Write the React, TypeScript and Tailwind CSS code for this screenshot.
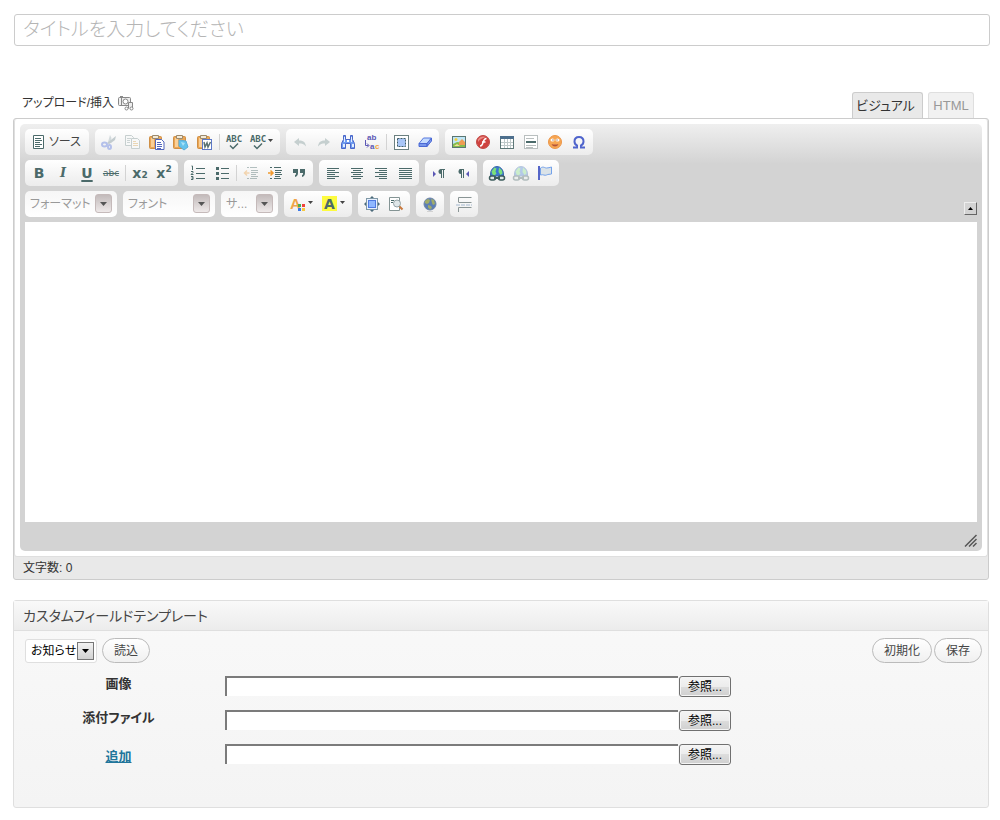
import type { ReactNode } from "react";

const INK = "#4b6a6a";

function Svg({ children }: { children: ReactNode }) {
  return (
    <svg width={16} height={16} viewBox="0 0 16 16" fill="none" className="block shrink-0 overflow-visible" aria-hidden="true">
      {children}
    </svg>
  );
}

function lines(rows: [number, number, number][], color = INK) {
  return rows.map(([x, y, w]) => <rect key={`${x}-${y}`} x={x} y={y} width={w} height={1} fill={color} />);
}

function Clipboard() {
  return (
    <>
      <rect x="0.5" y="2.5" width="12" height="12" rx="1" fill="#eba654" stroke="#cf8f45" />
      <path d="M2 4h3v9H2z" fill="#f9cf97" />
      <path d="M3.500 1.500h6v3h-6z" fill="#f3ead8" stroke="#9d8a6c" />
    </>
  );
}

function Globe({ faded }: { faded?: boolean }) {
  return (
    <g opacity={faded ? 0.35 : 1}>
      <path d="M1.500 9a6.500 7.500 0 0 1 13 0v2h-13z" fill="#3c78d0" stroke="#3a68a8" />
      <path d="M2.500 6.500L5.500 2.500l2 1-1 3 1 2-2 2-2-1zM10 2.500l3 3 .5 3-2 1.500-2-3z" fill="#7be07a" />
      <rect x="0.500" y="11" width="6" height="4" rx="2" fill="#dfe9e6" stroke="#3d5c5c" strokeWidth="1.500" />
      <rect x="9.500" y="11" width="6" height="4" rx="2" fill="#dfe9e6" stroke="#3d5c5c" strokeWidth="1.500" />
      <path d="M5 13h6" stroke="#3d5c5c" strokeWidth="2" />
    </g>
  );
}

const icons: Record<string, ReactNode> = {
  source: (
    <>
      <path d="M2.500 1.500h10v13h-10z" fill="#fff" stroke={INK} />
      {lines([[4, 4, 6], [4, 6, 7], [4, 8, 5], [4, 10, 7], [4, 12, 5]])}
    </>
  ),
  cut: (
    <>
      <path d="M9 1l1.500 3-1 4.500L8 11 7 8z" fill="#d3dadd" />
      <path d="M15 2l-1 4-4 3-3 1-1-1z" fill="#c3cccf" />
      <ellipse cx="3.500" cy="10.500" rx="2.500" ry="2" stroke="#b4c0ea" strokeWidth="2" />
      <ellipse cx="8.500" cy="13" rx="1.500" ry="2" stroke="#b4c0ea" strokeWidth="2" />
    </>
  ),
  copy: (
    <>
      <path d="M0.500 1.500h6l2 2v8h-8z" fill="#f7f8f8" stroke="#c6cfcf" />
      {lines([[2, 4, 4], [2, 6, 3], [2, 8, 3]], "#ccd4d4")}
      <path d="M6.500 4.500h6l2 2v8h-8z" fill="#f7f8f8" stroke="#c6cfcf" />
      {lines([[8, 7, 3], [8, 9, 5], [8, 11, 5]], "#ead6b4")}
    </>
  ),
  paste: (
    <>
      <Clipboard />
      <path d="M6.500 5.500h6l2.500 2.500v7.500H6.500z" fill="#fff" stroke="#5367bd" />
      {lines([[8, 8, 4], [8, 10, 5], [8, 12, 5], [8, 14, 4]], "#5367bd")}
    </>
  ),
  pasteText: (
    <>
      <Clipboard />
      <path d="M6 6l7 1 2 6-4 3-5-4z" fill="#64c3ec" stroke="#5aaedb" />
      <path d="M8 8l4 1-2 3z" fill="#a9e2f8" />
    </>
  ),
  pasteWord: (
    <>
      <Clipboard />
      <rect x="5.500" y="5.500" width="9" height="10" fill="#fff" stroke="#5c78c8" />
      <path d="M7 8l1 5 2-4 1 4L13.500 8" stroke="#5a7272" strokeWidth="1.500" />
    </>
  ),
  spell: (
    <>
      <text x="8" y="8" textAnchor="middle" fontSize="9" fontWeight="700" fontFamily="DejaVu Sans Mono, monospace" fill={INK}>ABC</text>
      <path d="M4 11.500l3 3L12 9.500" stroke={INK} strokeWidth="1.500" />
    </>
  ),
  undo: <path d="M2 8l5-4v2.500c4 0 6.500 1.500 7 6-2-2.500-4-3-7-3V12z" fill="#c5cfcf" />,
  redo: <path d="M14 8L9 4v2.500c-4 0-6.500 1.500-7 6 2-2.500 4-3 7-3V12z" fill="#c5cfcf" />,
  find: (
    <>
      <path d="M3.500 1.500h2v4h5v-4h2v4l2 4v5h-4v-5h-5v5h-4v-5l2-4z" fill="#6f9cf0" stroke="#4a66c8" />
      <path d="M3 10h2v3H3zM12 10h2v3h-2zM4 3h1v5H4zM11 3h1v5h-1z" fill="#e3efff" />
      <path d="M7 6h2v2H7z" fill="#fff" />
    </>
  ),
  replace: (
    <g fontFamily="Liberation Sans, sans-serif" fontWeight="700" fontSize="8">
      <text x="3" y="6" fill="#5b57b5">ab</text>
      <text x="6" y="15" fill="#5b57b5">a</text>
      <text x="11" y="15" fill="#f2a53c">c</text>
      <path d="M1.500 6v5.500h3M3 9.500l2 2-2 2" stroke="#5b57b5" />
    </g>
  ),
  selectAll: (
    <>
      <rect x="1.500" y="1.500" width="14" height="14" fill="#fff" stroke="#6b8080" />
      <rect x="4.500" y="4.500" width="8" height="8" fill="#a9c6f7" stroke="#3d5c66" strokeDasharray="2 1" />
    </>
  ),
  eraser: (
    <>
      <path d="M6.500 4h8L10 9.500H2z" fill="#c4dbff" stroke="#5577dd" />
      <path d="M2 9.500h8v3H2zM10 9.500L14.500 4v3L10 12.500z" fill="#7796ec" stroke="#4a68d4" />
    </>
  ),
  image: (
    <>
      <rect x="1.500" y="2.500" width="13" height="11" fill="#bfe6f6" stroke="#5a7672" />
      <path d="M2 10l4-2 8 1v4H2z" fill="#86bd4c" />
      <path d="M8 8l3-3 3 3v3H8z" fill="#ee9c52" />
      <circle cx="5" cy="5.500" r="1.500" fill="#f6cf3c" />
      <path d="M3 12l3-2 3 2z" fill="#f3e29a" />
    </>
  ),
  flash: (
    <>
      <circle cx="8" cy="8" r="6.500" fill="#cf4340" stroke="#c24a47" />
      <path d="M3 5.500a6 5 0 0 1 8-2.500C8 4 5 5 3 8z" fill="#e98b86" />
      <path d="M11.500 4.500c-3 0-3 3-4 5.500-.5 1.500-1 2-2.500 2M7 8h3.500" stroke="#fff" strokeWidth="1.500" />
    </>
  ),
  table: (
    <>
      <rect x="1.500" y="2.500" width="13" height="12" fill="#fff" stroke="#5d7777" />
      <path d="M1 2h14v3H1z" fill="#4d6f8d" />
      <path d="M2 8.500h12M2 11.500h12M5.500 5v9M8.500 5v9M11.500 5v9" stroke="#c0caca" />
    </>
  ),
  hr: (
    <>
      <rect x="1.500" y="1.500" width="13" height="13" fill="#fff" stroke="#b9bfbf" />
      {lines([[3, 4, 8], [3, 11, 10], [3, 13, 7]], "#b9bfbf")}
      <path d="M3 7h10v2H3z" fill={INK} />
    </>
  ),
  smiley: (
    <>
      <circle cx="8" cy="8" r="6.500" fill="#f7a652" stroke="#ec9648" />
      <ellipse cx="5.500" cy="6" rx="2" ry="1.500" fill="#fff" />
      <ellipse cx="10.500" cy="6" rx="2" ry="1.500" fill="#fff" />
      <path d="M5.500 5.500h1v1h-1zM9.500 5.500h1v1h-1z" fill="#6b3f1d" />
      <path d="M4.500 10q3.500 1 7 0-1 2.500-3.500 2.500T4.500 10z" fill="#b3543a" />
    </>
  ),
  omega: <path d="M2 13.500h4v-2C4 10.500 3.500 9 3.500 7.500c0-3 2-4.500 4.500-4.500s4.500 1.500 4.500 4.500c0 1.500-.5 3-2.500 4v2h4" stroke="#4f64cc" strokeWidth="2" />,
  ol: (
    <>
      <path d="M1.500 1h1v4M1 6.500h2v1l-2 2h2.500M1 11.500h2v3H1M1.500 13h1.500" stroke={INK} />
      {lines([[6, 3, 9], [6, 8, 9], [6, 13, 9]])}
    </>
  ),
  ul: (
    <>
      <path d="M2 2h3v3H2zM2 7h3v3H2zM2 12h3v3H2z" fill={INK} />
      {lines([[7, 3, 8], [7, 8, 8], [7, 13, 8]])}
    </>
  ),
  outdent: (
    <g opacity="0.4">
      {lines([[4, 2, 2], [7, 2, 7], [8, 5, 7], [8, 7, 7], [8, 9, 5], [8, 11, 7], [4, 13, 2], [7, 13, 7]])}
      <path d="M6.500 8H1.500M4 5.500L1.500 8 4 10.500" stroke="#f0a548" strokeWidth="1.500" />
    </g>
  ),
  indent: (
    <>
      {lines([[3, 2, 2], [7, 2, 7], [8, 5, 7], [8, 7, 6], [8, 9, 7], [8, 11, 5], [3, 13, 2], [7, 13, 7]])}
      <path d="M1 8h5M3.500 5.500L6 8l-2.500 2.500" stroke="#f09a2f" strokeWidth="1.500" />
    </>
  ),
  quote: <path d="M2 4h5v4c0 2-1 3.500-3 4v-2c1 0 1-1 1-2H2zM9 4h5v4c0 2-1 3.500-3 4v-2c1 0 1-1 1-2H9z" fill={INK} />,
  left: lines([[2, 3, 12], [2, 5, 8], [2, 7, 12], [2, 9, 8], [2, 11, 12], [2, 13, 8]]),
  center: lines([[2, 3, 12], [4, 5, 8], [2, 7, 12], [4, 9, 8], [2, 11, 12], [4, 13, 8]]),
  right: lines([[2, 3, 12], [6, 5, 8], [2, 7, 12], [6, 9, 8], [2, 11, 12], [6, 13, 8]]),
  justify: lines([[2, 3, 13], [2, 5, 13], [2, 7, 13], [2, 9, 13], [2, 11, 13], [2, 13, 13]]),
  ltr: (
    <>
      <path d="M2 6l3 3-3 3z" fill="#5b57b5" />
      <path d="M14 4.500H9.500M10.500 4v9M12.500 4v9" stroke={INK} />
      <path d="M10 4a2.500 2.500 0 0 0 0 5z" fill={INK} />
    </>
  ),
  rtl: (
    <>
      <path d="M14 6l-3 3 3 3z" fill="#5b57b5" />
      <path d="M9 4.500H4.500M6.500 4v9M8.500 4v9" stroke={INK} />
      <path d="M6 4a2.500 2.500 0 0 0 0 5z" fill={INK} />
    </>
  ),
  link: <Globe />,
  unlink: <Globe faded />,
  anchor: (
    <>
      <path d="M2 1v14" stroke="#5565c8" strokeWidth="2" />
      <path d="M3.500 3c3-2 4 0 6 0s3-.5 5-1v7c-2 .5-3 0-5 1s-3-1-6 0z" fill="#dbe3e8" stroke="#74a2ea" />
    </>
  ),
  textColor: (
    <>
      <text x="0" y="13" fontSize="15" fontWeight="700" fontFamily="Liberation Sans, sans-serif" fill="#f0a548">A</text>
      <path d="M8 8h3v3H8z" fill="#4caf50" />
      <path d="M12 8h3v3h-3z" fill="#f0433a" />
      <path d="M8 12h3v3H8z" fill="#3b78e7" />
      <path d="M12 12h3v3h-3z" fill="#f7c83b" />
    </>
  ),
  bgColor: (
    <>
      <path d="M0 0h15v15H0z" fill="#fdfb3f" />
      <text x="7.500" y="13" textAnchor="middle" fontSize="14" fontWeight="700" fontFamily="DejaVu Sans, sans-serif" fill={INK}>A</text>
    </>
  ),
  maximize: (
    <>
      <path d="M8 0l3 3H5zM8 16l3-3H5zM0 8l3-3v6zM16 8l-3-3v6z" fill="#4b6a7a" />
      <rect x="2.500" y="2.500" width="11" height="11" fill="#e8f1ff" stroke="#7f98a6" />
      <rect x="4.500" y="4.500" width="7" height="7" fill="#8fb8ff" stroke="#4f7ae0" />
    </>
  ),
  blocks: (
    <>
      <path d="M1.500 1.500h10v13h-10z" fill="#fff" stroke="#849494" />
      <path d="M3 4.500h3M3 6.500h2" stroke={INK} />
      <circle cx="9" cy="7.500" r="3.500" fill="#dfe6e8" stroke="#94a2a6" />
      <path d="M11.500 10.500l3 3" stroke="#c8793e" strokeWidth="2" />
    </>
  ),
  iframe: (
    <>
      <circle cx="8" cy="8" r="6" fill="#5c7eb4" stroke="#6f86a8" />
      <path d="M3 5l3-2 2 1-1 3-2 1-2-1zM9 3l3 1 1 4-2 1-1-2zM6 9l3 1 1 2-2 1.500-2-2z" fill="#a1ad68" />
      <path d="M5 15.500h6" stroke="#d2d2d2" />
    </>
  ),
  pageBreak: (
    <>
      <path d="M15.500 1.500h-13V6M15.500 11.500h-13V16M2.500 6.500h13" stroke="#8a9595" />
      <path d="M0 9h16" stroke="#a4b8ce" strokeDasharray="4 1" />
    </>
  ),
};

function Sep() {
  return <span className="mx-[2px] h-4 w-px shrink-0 bg-[#d3d3d3]" />;
}

function Tool({ icon, label }: { icon: string; label: string }) {
  return (
    <button type="button" aria-label={label} title={label} className="flex h-6 w-6 shrink-0 items-center justify-center">
      <Svg>{icons[icon]}</Svg>
    </button>
  );
}

function MenuTool({ icon, label }: { icon: string; label: string }) {
  return (
    <button type="button" aria-label={label} title={label} className="flex h-6 w-8 shrink-0 items-center pl-1">
      <Svg>{icons[icon]}</Svg>
      <svg width="5" height="16" viewBox="0 0 5 16" className="ml-[2px]" aria-hidden="true">
        <path d="M0 5h5L2.500 8z" fill="#444" />
      </svg>
    </button>
  );
}

function TextTool({ label, children }: { label: string; children: ReactNode }) {
  return (
    <button
      type="button"
      aria-label={label}
      title={label}
      className="flex h-6 w-6 shrink-0 items-center justify-center font-['DejaVu_Sans'] text-sm font-bold text-[#4b6a6a]"
    >
      {children}
    </button>
  );
}

function Group({ children }: { children: ReactNode }) {
  return (
    <div className="flex h-[26px] items-center rounded-[5px] bg-linear-to-b from-white to-[#ececec] px-[2px]">
      {children}
    </div>
  );
}

function Combo({ label, text, size }: { label: string; text: string; size: string }) {
  return (
    <div className={`relative h-[26px] rounded-[5px] bg-linear-to-b from-[#f6f6f6] to-white ${size}`}>
      <select aria-label={label} className="block h-full w-full appearance-none bg-transparent pl-[5px] text-xs text-[#999] outline-none">
        <option>{text}</option>
      </select>
      <span className="pointer-events-none absolute top-[3px] right-[5px] flex h-[19px] w-[17px] items-center justify-center rounded-[3px] border border-[#c5baba] bg-linear-to-b from-[#c3bbbb] to-[#eee9e9]">
        <svg width="7" height="4" viewBox="0 0 7 4" aria-hidden="true">
          <path d="M0 0h7L3.500 4z" fill="#555" />
        </svg>
      </span>
    </div>
  );
}

function PillButton({ children }: { children: ReactNode }) {
  return (
    <button type="button" className="h-[25px] rounded-full border border-[#bbb] bg-linear-to-b from-white to-[#f0f0f0] px-[11px] text-xs text-[#464646]">
      {children}
    </button>
  );
}

function FileRow({ id, low, children }: { id: string; low?: boolean; children: ReactNode }) {
  return (
    <div className="flex h-[21px]">
      <div className={`mr-[13px] w-[187px] shrink-0 text-center text-[13px] leading-4 font-bold ${low ? "self-end" : "self-start"}`}>
        {children}
      </div>
      <input id={id} aria-labelledby={`${id}-label`} type="text" className="h-5 w-[453px] min-w-0 border-t-2 border-l-2 border-[#7b7b7b] bg-white px-1 text-xs outline-none" />
      <button
        type="button"
        className="ml-px h-[21px] w-[52px] shrink-0 rounded-[3px] border border-[#707070] bg-[linear-gradient(#f4f4f4,#ececec_50%,#dddddd_50%,#cfcfcf)] text-xs leading-none text-black inset-ring inset-ring-[#f5f5f5]"
      >
        参照...
      </button>
    </div>
  );
}

export default function App() {
  return (
    <main className="min-h-screen bg-white pb-3 font-['Liberation_Sans','Noto_Sans_CJK_JP',sans-serif] text-xs text-[#333] [font-feature-settings:'palt']">
      <div className="pt-[14px] pr-[10px] pl-[14px]">
        <input
          type="text"
          aria-label="タイトル"
          placeholder="タイトルを入力してください"
          className="block h-8 w-full rounded-[3px] border border-[#ccc] px-2 text-[19px] font-light outline-none placeholder:text-[#b5b5b5]"
        />
      </div>

      <div className="mt-[46px] pr-[11px] pl-[13px]">
        <div className="flex h-[26px] items-end justify-between pr-[15px] pl-[9px]">
          <a href="#media" className="flex h-[26px] items-center gap-1 pb-1">
            アップロード/挿入
            <Svg>
              <rect x="0.500" y="2.500" width="12" height="8" rx="1" fill="#eee" stroke="#888" />
              <path d="M2 1.500h3M3.500 3v7" stroke="#888" />
              <circle cx="7.500" cy="6.500" r="2.500" fill="#fff" stroke="#888" />
              <path d="M10.500 13.500v-6h4v6" fill="#eee" stroke="#888" />
              <circle cx="8.500" cy="13.500" r="1.500" fill="#fff" stroke="#888" />
              <circle cx="13.500" cy="13.500" r="1.500" fill="#fff" stroke="#888" />
            </Svg>
          </a>
          <div className="flex gap-[5px]">
            <button type="button" className="h-[26px] w-[71px] rounded-t-[3px] border border-b-0 border-[#ccc] bg-[#e9e9e9] pr-1 text-[13px]">ビジュアル</button>
            <button type="button" className="h-[26px] w-[46px] rounded-t-[3px] border border-b-0 border-[#dfdfdf] bg-[#f1f1f1] text-[13px] text-[#999]">HTML</button>
          </div>
        </div>

        <div className="rounded-[3px] border border-[#ccc] bg-[#e9e9e9]">
          <div className="rounded-[3px] border-x border-b border-[#dfdfdf] bg-white px-[5px] pt-[5px] pb-[5px]">
            <div className="rounded-[5px] bg-[#d3d3d3] bg-[linear-gradient(#efefef,#d3d3d3_40px)] px-[5px] pt-[5px]">
              <div className="flex flex-col gap-[5px] pb-[5px]">
                <div className="flex flex-wrap gap-x-[6px] gap-y-[5px]">
                  <Group>
                    <button type="button" className="flex h-6 items-center gap-[2px] px-1 text-[#444]">
                      <Svg>{icons.source}</Svg>
                      <span className="w-[34px] text-left whitespace-nowrap">ソース</span>
                    </button>
                  </Group>
                  <Group>
                    <Tool icon="cut" label="切り取り" />
                    <Tool icon="copy" label="コピー" />
                    <Tool icon="paste" label="貼り付け" />
                    <Tool icon="pasteText" label="プレーンテキスト貼り付け" />
                    <Tool icon="pasteWord" label="ワード文章から貼り付け" />
                    <Sep />
                    <Tool icon="spell" label="スペルチェック" />
                    <MenuTool icon="spell" label="スペルチェック設定" />
                  </Group>
                  <Group>
                    <Tool icon="undo" label="元に戻す" />
                    <Tool icon="redo" label="やり直し" />
                    <Tool icon="find" label="検索" />
                    <Tool icon="replace" label="置き換え" />
                    <Sep />
                    <Tool icon="selectAll" label="すべて選択" />
                    <Tool icon="eraser" label="フォーマット削除" />
                  </Group>
                  <Group>
                    <Tool icon="image" label="イメージ" />
                    <Tool icon="flash" label="Flash" />
                    <Tool icon="table" label="テーブル" />
                    <Tool icon="hr" label="横罫線" />
                    <Tool icon="smiley" label="絵文字" />
                    <Tool icon="omega" label="特殊文字挿入" />
                  </Group>
                </div>

                <div className="flex flex-wrap gap-x-[6px] gap-y-[5px]">
                  <Group>
                    <TextTool label="太字">B</TextTool>
                    <TextTool label="斜体"><i className="font-['DejaVu_Serif'] text-[13px]">I</i></TextTool>
                    <TextTool label="下線"><u className="decoration-2 underline-offset-2">U</u></TextTool>
                    <TextTool label="打ち消し線"><s className="text-[9px] font-normal">abc</s></TextTool>
                    <Sep />
                    <TextTool label="下付き">x<sub className="text-[9px]">2</sub></TextTool>
                    <TextTool label="上付き">x<sup className="text-[9px]">2</sup></TextTool>
                  </Group>
                  <Group>
                    <Tool icon="ol" label="段落番号" />
                    <Tool icon="ul" label="箇条書き" />
                    <Sep />
                    <Tool icon="outdent" label="インデント解除" />
                    <Tool icon="indent" label="インデント" />
                    <Tool icon="quote" label="ブロック引用" />
                  </Group>
                  <Group>
                    <Tool icon="left" label="左揃え" />
                    <Tool icon="center" label="中央揃え" />
                    <Tool icon="right" label="右揃え" />
                    <Tool icon="justify" label="両端揃え" />
                  </Group>
                  <Group>
                    <Tool icon="ltr" label="左から右" />
                    <Tool icon="rtl" label="右から左" />
                  </Group>
                  <Group>
                    <Tool icon="link" label="リンク挿入" />
                    <Tool icon="unlink" label="リンク削除" />
                    <Tool icon="anchor" label="アンカー挿入" />
                  </Group>
                </div>

                <div className="flex flex-wrap gap-x-[6px] gap-y-[5px]">
                  <Combo label="フォーマット" text="フォーマット" size="w-[92px]" />
                  <Combo label="フォント" text="フォント" size="w-[92px]" />
                  <Combo label="サイズ" text="サ..." size="w-[57px]" />
                  <Group>
                    <MenuTool icon="textColor" label="テキストカラー" />
                    <MenuTool icon="bgColor" label="背景色" />
                  </Group>
                  <Group>
                    <Tool icon="maximize" label="最大化" />
                    <Tool icon="blocks" label="ブロック表示" />
                  </Group>
                  <Group>
                    <Tool icon="iframe" label="iframe" />
                  </Group>
                  <Group>
                    <Tool icon="pageBreak" label="改ページ挿入" />
                  </Group>
                  <button
                    type="button"
                    aria-label="ツールバーを閉じる"
                    className="mb-[2px] ml-auto flex h-[13px] w-[13px] items-center justify-center self-end border border-t-[#eee] border-r-[#666] border-b-[#666] border-l-[#eee] bg-[#d3d3d3]"
                  >
                    <svg width="5" height="3" viewBox="0 0 5 3" aria-hidden="true">
                      <path d="M0 3h5L2.500 0z" fill="#000" />
                    </svg>
                  </button>
                </div>
              </div>
              <textarea aria-label="本文" className="block h-[300px] w-full resize-none bg-white p-2 outline-none" />
              <div className="flex h-[29px] items-end justify-end pb-1">
                <svg width="13" height="13" viewBox="0 0 13 13" stroke="#555" strokeWidth="1.500" aria-hidden="true">
                  <path d="M1 12.500L12.500 1M5 12.500L12.500 5M9 12.500L12.500 9" />
                </svg>
              </div>
            </div>
          </div>
          <div className="flex h-[22px] items-center px-[9px]">文字数: 0</div>
        </div>

        <section className="mt-5 rounded-[3px] border border-[#dfdfdf] bg-linear-to-b from-[#f9f9f9] to-[#f4f4f4]">
          <h2 className="flex h-[30px] items-center border-b border-[#dfdfdf] bg-linear-to-b from-[#f9f9f9] to-[#ececec] px-[9px] text-sm text-[#464646]">
            カスタムフィールドテンプレート
          </h2>
          <div className="pt-[7px] pr-[6px] pb-[42px] pl-[11px]">
            <div className="flex items-center">
              <div className="relative h-6 w-[72px]">
                <select aria-label="テンプレート" className="block h-6 w-full appearance-none rounded-[3px] border border-[#dfdfdf] bg-white pl-[5px] text-xs text-black outline-none">
                  <option>お知らせ</option>
                </select>
                <span className="pointer-events-none absolute top-[3px] right-[3px] flex h-[18px] w-[17px] items-center justify-center border border-[#777] bg-linear-to-b from-[#f2f2f2] to-[#d2d2d2]">
                  <svg width="7" height="4" viewBox="0 0 7 4" aria-hidden="true">
                    <path d="M0 0h7L3.500 4z" fill="#000" />
                  </svg>
                </span>
              </div>
              <div className="ml-[5px] flex flex-1 justify-between">
                <PillButton>読込</PillButton>
                <div className="flex gap-[2px]">
                  <PillButton>初期化</PillButton>
                  <PillButton>保存</PillButton>
                </div>
              </div>
            </div>
            <div className="mt-[13px] flex flex-col gap-[13px]">
              <FileRow id="image">
                <label id="image-label" htmlFor="image">画像</label>
              </FileRow>
              <FileRow id="attachment">
                <label id="attachment-label" htmlFor="attachment">添付ファイル</label>
              </FileRow>
              <FileRow id="extra" low>
                <a id="extra-label" href="#add" className="text-[#21759b] underline">追加</a>
              </FileRow>
            </div>
          </div>
        </section>
      </div>
    </main>
  );
}
